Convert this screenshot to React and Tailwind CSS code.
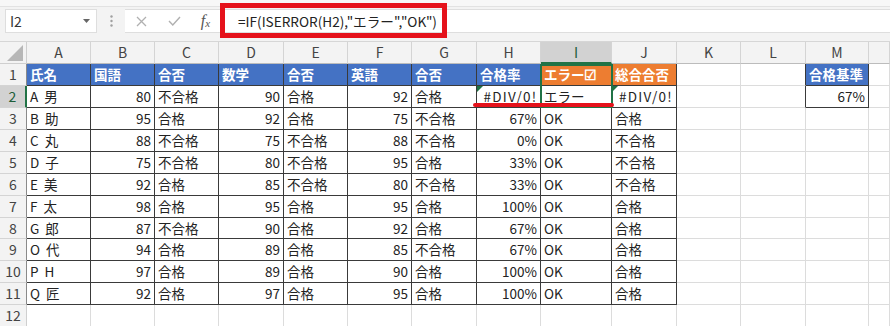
import React from "react";

const COLS = ["A", "B", "C", "D", "E", "F", "G", "H", "I", "J", "K", "L", "M", ""];
const WIDTHS = [
  "w-[64px]",
  "w-[64px]",
  "w-[64px]",
  "w-[65px]",
  "w-[64px]",
  "w-[64px]",
  "w-[65px]",
  "w-[64px]",
  "w-[71px]",
  "w-[65px]",
  "w-[64px]",
  "w-[65px]",
  "w-[63px]",
  "flex-1",
];

const HEAD = ["氏名", "国語", "合否", "数学", "合否", "英語", "合否", "合格率", "エラー☑", "総合合否"];

const DATA = [
  ["A 男", "80", "不合格", "90", "合格", "92", "合格", "#DIV/0!", "エラー", "#DIV/0!"],
  ["B 助", "95", "合格", "92", "合格", "75", "不合格", "67%", "OK", "合格"],
  ["C 丸", "88", "不合格", "75", "不合格", "88", "不合格", "0%", "OK", "不合格"],
  ["D 子", "75", "不合格", "80", "不合格", "95", "合格", "33%", "OK", "不合格"],
  ["E 美", "92", "合格", "85", "不合格", "80", "不合格", "33%", "OK", "不合格"],
  ["F 太", "98", "合格", "95", "合格", "95", "合格", "100%", "OK", "合格"],
  ["G 郎", "87", "不合格", "90", "合格", "92", "合格", "67%", "OK", "合格"],
  ["O 代", "94", "合格", "89", "合格", "85", "不合格", "67%", "OK", "合格"],
  ["P H", "97", "合格", "89", "合格", "90", "合格", "100%", "OK", "合格"],
  ["Q 匠", "92", "合格", "97", "合格", "95", "合格", "100%", "OK", "合格"],
];

// cells with the dark table border: A1:J11 and M1:M2
const inTable = (r, c) => (r >= 1 && r <= 11 && c >= 0 && c <= 9) || (c === 12 && (r === 1 || r === 2));

function cellValue(r, c) {
  if (r === 1) {
    if (c < 10) return HEAD[c];
    if (c === 12) return "合格基準";
    return "";
  }
  if (r >= 2 && r <= 11 && c < 10) return DATA[r - 2][c];
  if (r === 2 && c === 12) return "67%";
  return "";
}

function Cell({ r, c }) {
  const v = cellValue(r, c);
  const head = r === 1 && v !== "";
  const orange = head && (c === 8 || c === 9);
  const rightDark = inTable(r, c) || inTable(r, c + 1);
  const bottomDark = inTable(r, c) || inTable(r + 1, c);
  const isError = v === "#DIV/0!";
  const right = !head && /^[0-9]+%?$/.test(v);

  let bg = "bg-white";
  if (head) bg = orange ? "bg-[#ed7d31]" : "bg-[#4472c4]";

  // name column: wider gap between initial and kanji
  const name = c === 0 && r >= 2 ? v.split(" ") : null;

  return (
    <div
      className={`${WIDTHS[c]} shrink-0 h-full border-r border-b flex items-center px-[3px] overflow-hidden whitespace-nowrap relative ${bg} ${
        rightDark ? "border-r-[#3a3a3a]" : "border-r-[#dcdcdc]"
      } ${bottomDark ? "border-b-[#3a3a3a]" : "border-b-[#dcdcdc]"} ${
        isError ? "justify-center" : right ? "justify-end" : "justify-start"
      } ${head ? "text-white font-bold" : "text-[#222]"}`}
    >
      {isError && (
        <span className="absolute left-0 top-0 w-0 h-0 border-t-[6px] border-r-[6px] border-t-[#1e7145] border-r-transparent" />
      )}
      {name ? (
        <span className="flex gap-[6px]">
          <span>{name[0]}</span>
          <span>{name[1]}</span>
        </span>
      ) : (
        <span className={isError ? "tracking-[1.3px] pl-[4px]" : ""}>{v}</span>
      )}
    </div>
  );
}

function HeaderRow() {
  return (
    <div className="flex h-[22px] bg-[#f3f3f3]">
      <div className="w-[27px] shrink-0 h-full border-r border-b border-[#cfcfcf] relative">
        <svg className="absolute right-[3px] bottom-[2px]" width="16" height="16" viewBox="0 0 16 16">
          <polygon points="16,0 16,16 0,16" fill="#b7b7b7" />
        </svg>
      </div>
      {COLS.map((l, c) => (
        <div
          key={c}
          className={`${WIDTHS[c]} shrink-0 h-full flex items-center justify-center border-r border-r-[#d4d4d4] text-[14px] ${
            c === 8
              ? "bg-[#d2d2d2] border-b-2 border-b-[#217346] text-[#1d5e39]"
              : "border-b border-b-[#bcbcbc] text-[#444]"
          }`}
        >
          {l}
        </div>
      ))}
    </div>
  );
}

function Row({ r }) {
  const sel = r === 2;
  return (
    <div className={`flex ${r === 8 ? "h-[21px]" : "h-[22px]"}`}>
      <div
        className={`w-[27px] shrink-0 h-full flex items-center justify-center border-b border-b-[#d4d4d4] text-[14px] ${
          sel
            ? "bg-[#d2d2d2] border-r-2 border-r-[#217346] text-[#1d5e39]"
            : `bg-[#f3f3f3] border-r text-[#444] ${r <= 11 ? "border-r-[#8a8a8a]" : "border-r-[#cfcfcf]"}`
        }`}
      >
        {r}
      </div>
      {COLS.map((_, c) => (
        <Cell key={c} r={r} c={c} />
      ))}
    </div>
  );
}

export default function App() {
  return (
    <div className="w-[890px] h-[326px] overflow-hidden relative bg-white font-['Noto_Sans_CJK_JP',sans-serif] text-[13.5px]">
      {/* formula bar */}
      <div className="h-[42px] bg-[#f3f3f3] border-b border-[#d6d6d6]">
        <div className="h-[7px] bg-[#f7f7f7] border-b border-[#e2e2e2]" />
        <div className="flex h-[24px] mt-[2px]">
          <div className="ml-[5px] w-[92px] shrink-0 bg-white border border-[#dedede] flex items-center justify-between pl-[4px] pr-[6px]">
            <span className="text-[14px] text-[#333]">I2</span>
            <svg width="7" height="4" viewBox="0 0 7 4">
              <polygon points="0,0 7,0 3.5,4" fill="#666" />
            </svg>
          </div>
          <div className="w-[28px] shrink-0 flex items-center justify-center">
            <svg width="3" height="12" viewBox="0 0 3 12">
              <circle cx="1.5" cy="1.5" r="1.2" fill="#a0a0a0" />
              <circle cx="1.5" cy="6" r="1.2" fill="#a0a0a0" />
              <circle cx="1.5" cy="10.5" r="1.2" fill="#a0a0a0" />
            </svg>
          </div>
          <div className="flex-1 bg-white border-y border-[#dedede] flex items-center">
            <div className="w-[33px] flex justify-center">
              <svg width="11" height="11" viewBox="0 0 11 11">
                <path d="M1 1 L10 10 M10 1 L1 10" stroke="#b0b0b0" strokeWidth="1.3" fill="none" />
              </svg>
            </div>
            <div className="w-[33px] flex justify-center">
              <svg width="13" height="10" viewBox="0 0 13 10">
                <path d="M1 5 L4.8 9 L12 1" stroke="#b0b0b0" strokeWidth="1.4" fill="none" />
              </svg>
            </div>
            <div className="w-[29px] flex justify-center font-['Liberation_Serif',serif] italic text-[#555] text-[16px] leading-none">
              <span>f</span>
              <span className="text-[11px] mt-[5px]">x</span>
            </div>
            <div className="ml-[18px] text-[13.6px] text-[#222] whitespace-nowrap">
              =IF(ISERROR(H2),"エラー","OK")
            </div>
          </div>
        </div>
      </div>

      {/* sheet */}
      <HeaderRow />
      {Array.from({ length: 12 }, (_, i) => (
        <Row key={i} r={i + 1} />
      ))}

      {/* annotations over the sheet */}
      <div className="absolute left-[220px] top-[3px] w-[227px] h-[35px] border-[5px] border-[#e5121b]" />
      <div className="absolute left-[540px] top-[64px] w-[73px] h-[44px] border-2 border-[#217346]" />
      <div className="absolute left-[473px] top-[103px] w-[141px] h-[4px] rounded-full bg-[#e5121b]" />
    </div>
  );
}
